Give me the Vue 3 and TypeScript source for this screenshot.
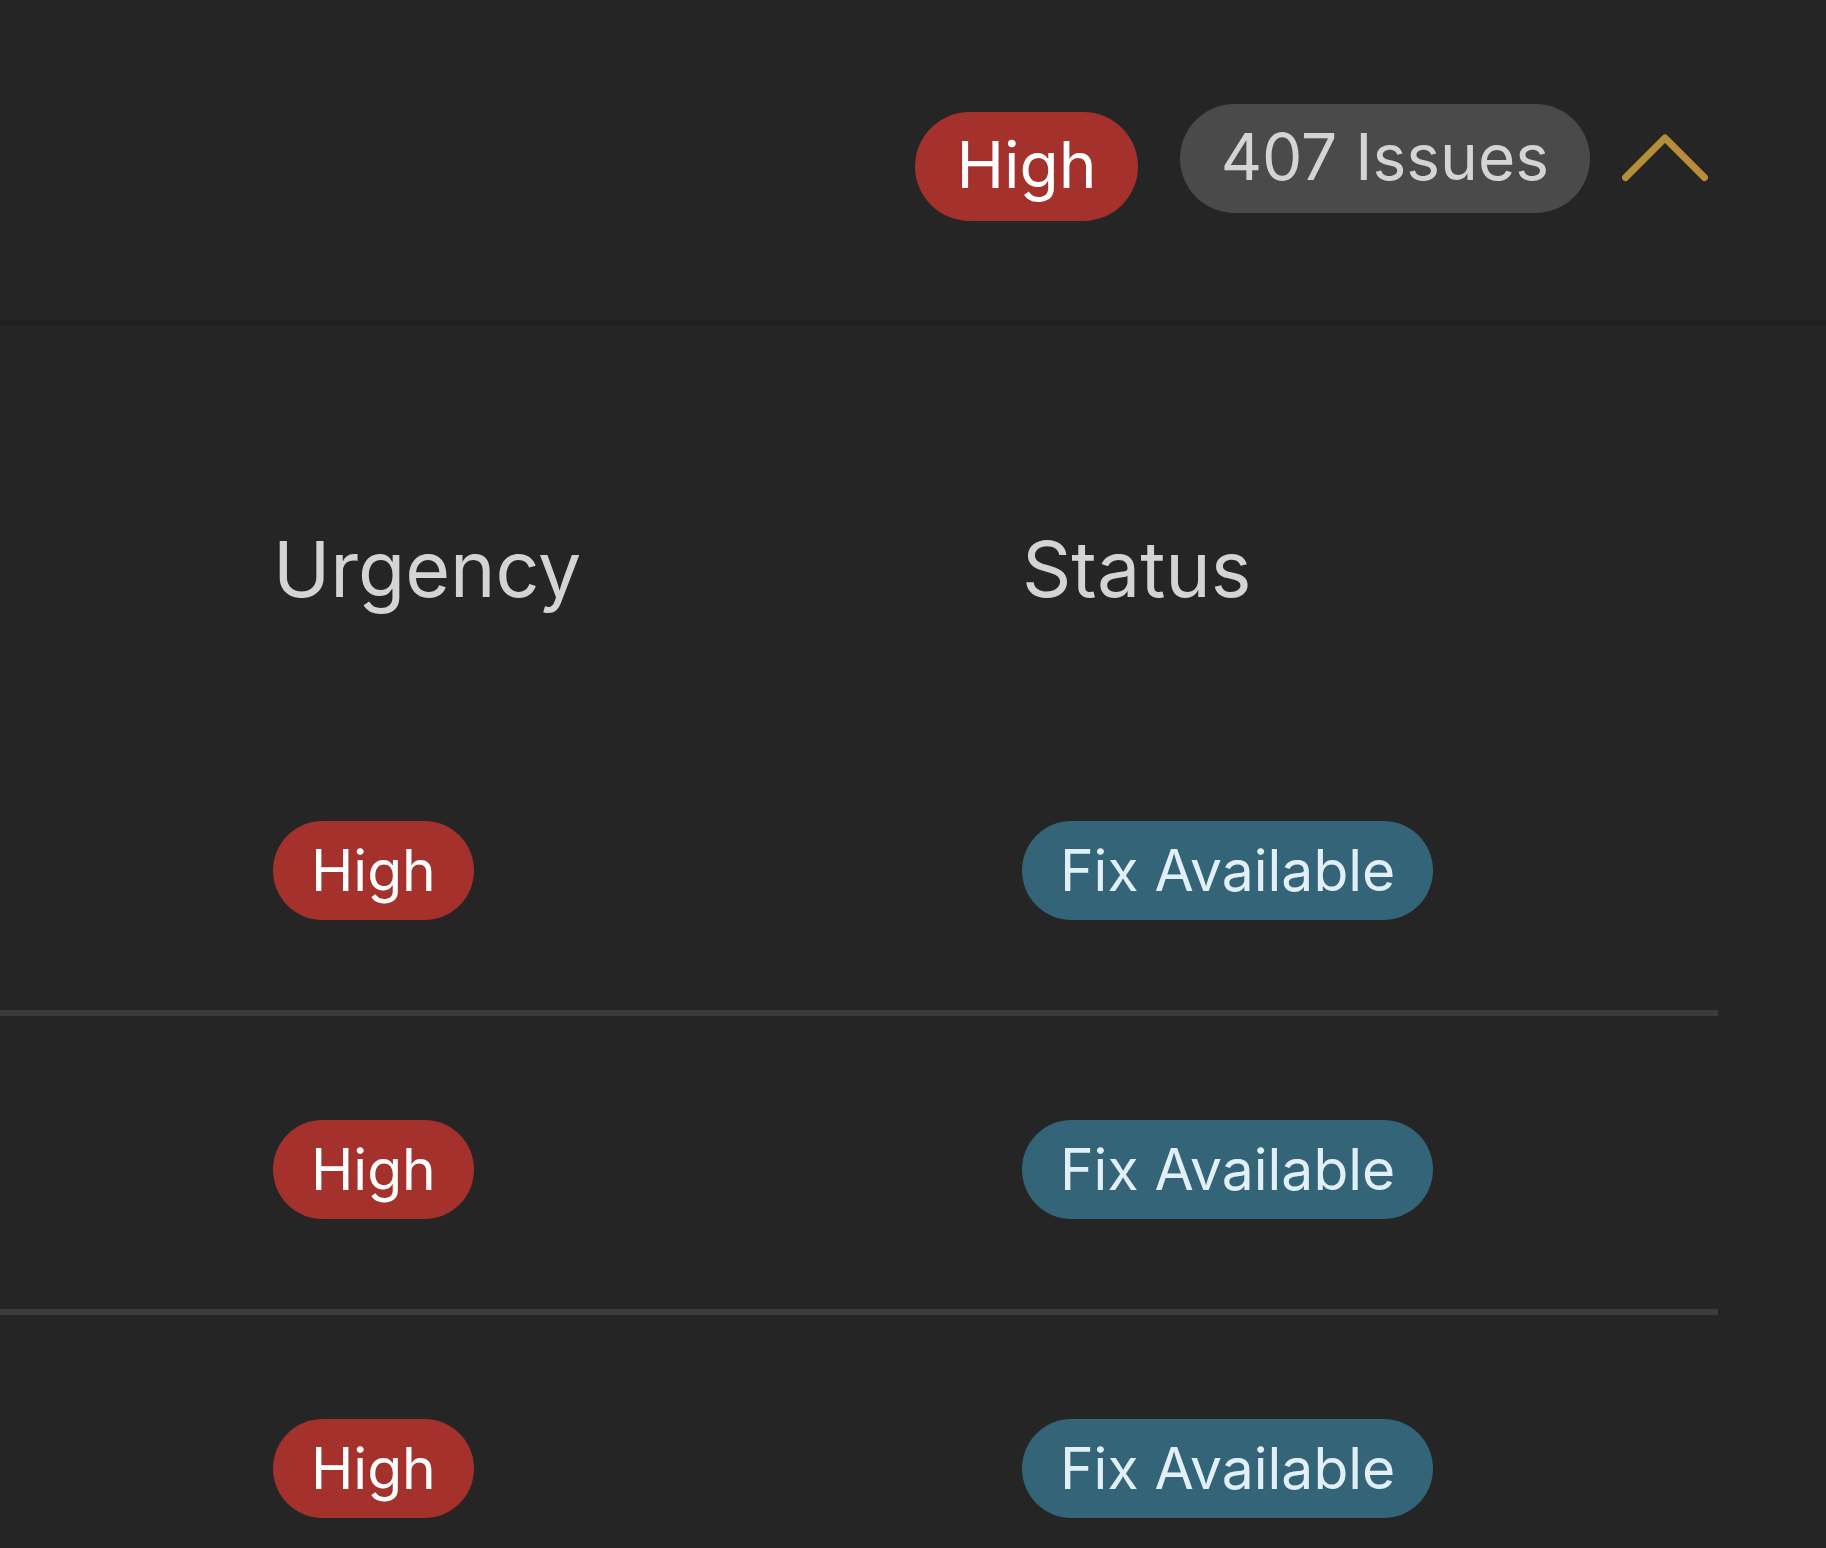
<script setup lang="ts">
import { ref } from 'vue'

interface Issue {
  id: number
  urgency: string
  status: string
}

const expanded = ref(true)

const issues: Issue[] = [
  { id: 1, urgency: 'High', status: 'Fix Available' },
  { id: 2, urgency: 'High', status: 'Fix Available' },
  { id: 3, urgency: 'High', status: 'Fix Available' },
]
</script>

<template>
  <main class="panel">
    <header class="summary">
      <span class="pill pill-large pill-high summary-urgency">High</span>
      <span class="pill pill-large pill-count">407 Issues</span>
      <button
        class="toggle"
        type="button"
        aria-label="Toggle issues"
        :aria-expanded="expanded"
        @click="expanded = !expanded"
      >
        <svg class="chevron" :class="{ closed: !expanded }" viewBox="0 0 86 48" aria-hidden="true">
          <path d="M3.5 43.5 43 4 82.5 43.5" />
        </svg>
      </button>
    </header>

    <table v-if="expanded" class="issues">
      <thead>
        <tr>
          <th class="urgency" scope="col">Urgency</th>
          <th class="status" scope="col">Status</th>
        </tr>
      </thead>
      <tbody>
        <tr v-for="issue in issues" :key="issue.id">
          <td class="urgency"><span class="pill pill-high">{{ issue.urgency }}</span></td>
          <td class="status"><span class="pill pill-fix">{{ issue.status }}</span></td>
        </tr>
      </tbody>
    </table>
  </main>
</template>

<style>
body {
  margin: 0;
  background: #252525;
}
</style>

<style scoped>
.panel {
  box-sizing: border-box;
  height: 100vh;
  overflow: hidden;
  background: #252525;
  color: #d4d4d4;
  font-family: Inter, sans-serif;
  font-weight: 440;
}

.summary {
  display: flex;
  justify-content: flex-end;
  align-items: flex-start;
  padding: 104px 118px 99px 0;
  border-bottom: 5px solid #202020;
}

.summary-urgency {
  margin: 8px 42px 0 0;
}

.pill {
  display: block;
  width: fit-content;
  padding: 0 38px;
  border-radius: 50px;
  font-size: 57px;
  line-height: 99px;
  white-space: nowrap;
}

.pill-large {
  padding: 0 41px 3px;
  border-radius: 55px;
  font-size: 64px;
  line-height: 106px;
}

.pill-high {
  background: #a4312b;
  color: #fff;
}

.pill-count {
  background: #4a4a4a;
  color: #d4d4d4;
}

.pill-fix {
  background: #346478;
  color: #e2eff6;
}

.toggle {
  display: flex;
  align-items: center;
  height: 107px;
  margin-left: 32px;
  padding: 0;
  border: 0;
  background: none;
  cursor: pointer;
}

.chevron {
  width: 86px;
  height: 48px;
  fill: none;
  stroke: #b68d38;
  stroke-width: 7;
  stroke-linecap: round;
  stroke-linejoin: round;
}

.chevron.closed {
  transform: rotate(180deg);
}

.issues {
  width: calc(100% - 108px);
  border-spacing: 0;
  table-layout: fixed;
}

th {
  padding: 196px 0 100px 120px;
  font-size: 77px;
  font-weight: inherit;
  line-height: 96px;
  text-align: left;
}

td {
  padding: 104px 0 90px 120px;
  border-bottom: 6px solid #3b3b3e;
}

.urgency {
  box-sizing: border-box;
  width: 52.5%;
  padding-left: 273px;
}
</style>
